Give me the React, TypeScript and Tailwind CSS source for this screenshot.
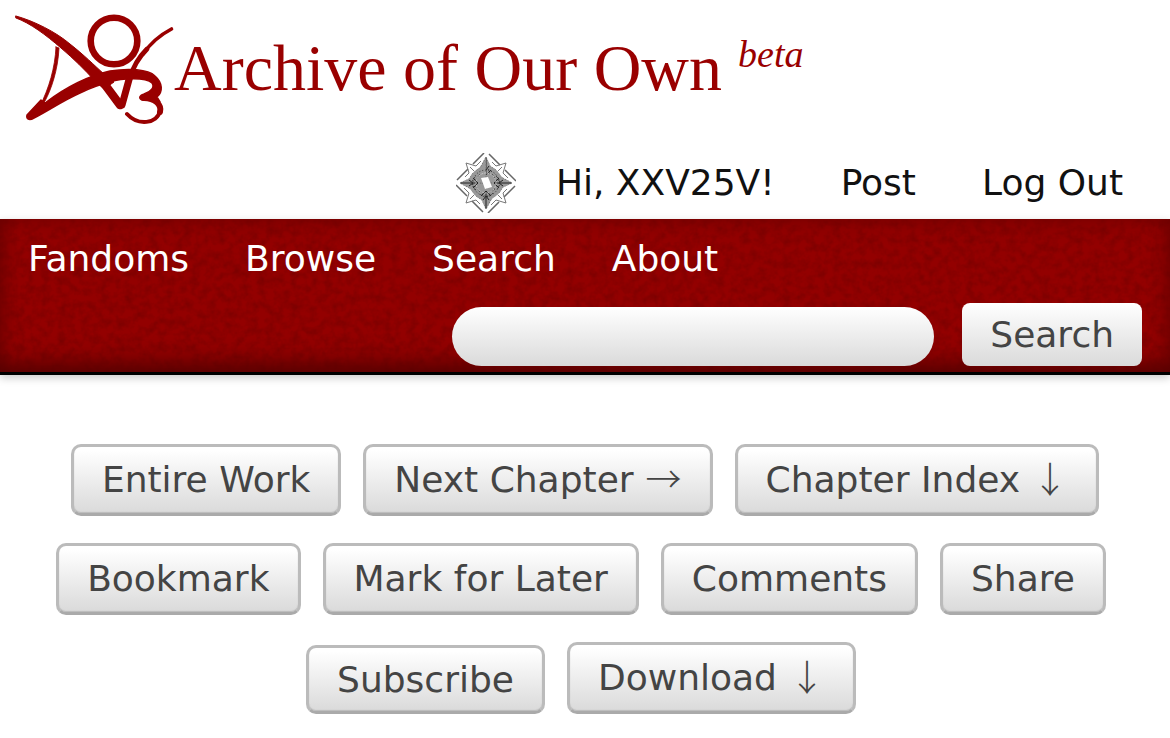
import React from "react";

const NAV_LINKS = ["Fandoms", "Browse", "Search", "About"];

function Logo() {
  return (
    <svg
      viewBox="0 0 160 110"
      className="h-[110px] w-40 shrink-0"
      fill="none"
      stroke="#990000"
      strokeLinecap="round"
      strokeLinejoin="round"
      aria-hidden="true"
    >
      <circle cx="100" cy="27" r="23.3" strokeWidth="6.6" />
      <path
        d="M2 2C20 7 42 18 56 30C70 41 80 51 91 61L100 68L90 75L82 68C70 55 60 45 47 34C32 21 16 9 2 4Z"
        fill="#990000"
        strokeWidth="1"
      />
      <path d="M86 64L106 91" strokeWidth="8.500" />
      <path d="M42 33L45 34C44 56 37 76 31 87L26 92C35 74 41 54 42 33Z" fill="#990000" strokeWidth="0.800" />
      <path
        d="M13 101L27 86L31 89C52 73 74 62 96 57C114 54 134 55 141 62C149 69 149 78 143 83L146 88C140 85 134 87 128 86C124 84 126 81 130 80C137 78 141 73 138 69C132 63 108 64 96 68C84 71 76 74 66 79C48 87 34 97 20 104C15 107 12 105 13 101Z"
        fill="#990000"
        strokeWidth="1.500"
      />
      <path d="M130 84C141 84 148 91 146 98" strokeWidth="6" />
      <path d="M146 97C143 110 124 112 113 100" strokeWidth="4" />
      <path d="M157.500 15C146 21 136 30 129 40" strokeWidth="3.600" />
      <path d="M133 35C124 44 119 53 116 64" strokeWidth="4.800" />
      <path d="M116 62L108 91" strokeWidth="7" />
    </svg>
  );
}

function Avatar() {
  return (
    <svg viewBox="0 0 60 60" className="size-[60px]" fill="none" stroke="#444" strokeWidth="1" aria-hidden="true">
      {[0, 90, 180, 270].map((angle) => (
        <g key={angle} transform={`rotate(${angle} 30 30)`}>
          <path d="M33 1L44 12M49 17L60 28" stroke="#666" strokeWidth="1.500" />
          <path d="M36 9L40 13L50 10L47 20L52 25M42 18L46 14" stroke="#777" />
          <path d="M30 4L34 13L40 17L45 24L56 30H30Z" fill="#999" stroke="#777" strokeDasharray="2 1" />
          <path d="M30 4L26 13L20 17L15 24H45L40 17L34 13Z" fill="#999" stroke="none" />
          <path d="M30 5V22M27 13L30 17L33 13M25 17L30 22L35 17" stroke="#222" />
          <path d="M23 20C27 15 33 15 37 20M21 24L28 19M39 24L32 19" stroke="#333" strokeDasharray="1 1" />
        </g>
      ))}
      <circle cx="30" cy="30" r="10" stroke="#ccc" strokeDasharray="2 1" />
      <circle cx="30" cy="30" r="13" stroke="#333" strokeDasharray="1 2" />
      <path d="M25 25L32 24L36 34L29 36Z" fill="#fff" stroke="none" />
    </svg>
  );
}

function NavTexture() {
  return (
    <svg className="pointer-events-none absolute inset-0 size-full" aria-hidden="true">
      <filter id="grain" x="0" y="0" width="100%" height="100%">
        <feTurbulence type="fractalNoise" baseFrequency="0.12" numOctaves="3" seed="8" />
        <feColorMatrix values="0 0 0 0 0  0 0 0 0 0  0 0 0 0 0  0.9 0 0 0 -0.32" />
      </filter>
      <rect width="100%" height="100%" filter="url(#grain)" opacity="0.3" />
    </svg>
  );
}

function ActionButton({ label, arrow, short }: { label: string; arrow?: string; short?: boolean }) {
  return (
    <button
      type="button"
      className={
        "flex items-center whitespace-nowrap rounded-[10px] border-[3px] border-[#bbb] border-b-[#aaa] bg-linear-to-b from-white from-5% to-[#dadada] px-7 shadow-[inset_0_-1px_1px_#bbb] " +
        (short ? "h-[69px]" : "h-[72px]")
      }
    >
      <span>{label}</span>
      {arrow && <span className="ml-3 pb-[6px] font-['Noto_Sans_CJK_JP',sans-serif] font-light">{arrow}</span>}
    </button>
  );
}

export default function App() {
  return (
    <div className="min-h-screen bg-white font-['Verdana','DejaVu_Sans',sans-serif] text-[36px] leading-[44px] text-[#444]">
      <header>
        <h1 className="flex pt-[14px] pl-[14px] text-[#900]">
          <a href="#home" className="flex font-['Georgia','Liberation_Serif',serif]">
            <Logo />
            <span className="pt-[14px] text-[66px] leading-[80px]">Archive of Our Own</span>
            <sup className="top-0 ml-4 pt-[18px] text-[38px] leading-[44px] italic">beta</sup>
          </a>
        </h1>
        <div className="flex items-center justify-end gap-[66px] pt-[29px] pr-[47px] pb-[6px] text-[#111]">
          <div className="flex items-center gap-10">
            <Avatar />
            <a href="#profile">Hi, XXV25V!</a>
          </div>
          <a href="#post">Post</a>
          <a href="#logout">Log Out</a>
        </div>
        <nav className="relative border-b-[3px] border-black bg-[#930000] text-white shadow-[0_3px_8px_#ccc]">
          <NavTexture />
          <div className="pointer-events-none absolute inset-0 shadow-[inset_0_-16px_24px_-10px_#500000,inset_0_0_20px_#700000]" />
          <div className="relative">
            <ul className="flex gap-14 px-7 pt-[18px]">
              {NAV_LINKS.map((link) => (
                <li key={link}>
                  <a href={"#" + link.toLowerCase()}>{link}</a>
                </li>
              ))}
            </ul>
            <form className="flex items-end justify-end gap-7 pt-[22px] pr-7 pb-[6px]">
              <input
                type="text"
                aria-label="Search works"
                className="h-[59px] w-[482px] rounded-full bg-linear-to-b from-white to-[#dadada] px-7 text-[#444]"
              />
              <button
                type="button"
                className="h-[63px] rounded-[8px] bg-linear-to-b from-white to-[#dadada] px-7 text-[#444]"
              >
                Search
              </button>
            </form>
          </div>
        </nav>
      </header>
      <main className="flex flex-col items-center gap-[27px] pt-[69px]">
        <div className="flex gap-[22px]">
          <ActionButton label="Entire Work" />
          <ActionButton label="Next Chapter" arrow="→" />
          <ActionButton label="Chapter Index" arrow="↓" />
        </div>
        <div className="flex gap-[22px] pr-2">
          <ActionButton label="Bookmark" />
          <ActionButton label="Mark for Later" />
          <ActionButton label="Comments" />
          <ActionButton label="Share" />
        </div>
        <div className="flex items-end gap-[22px] pr-2">
          <ActionButton label="Subscribe" short />
          <ActionButton label="Download" arrow="↓" />
        </div>
      </main>
    </div>
  );
}
